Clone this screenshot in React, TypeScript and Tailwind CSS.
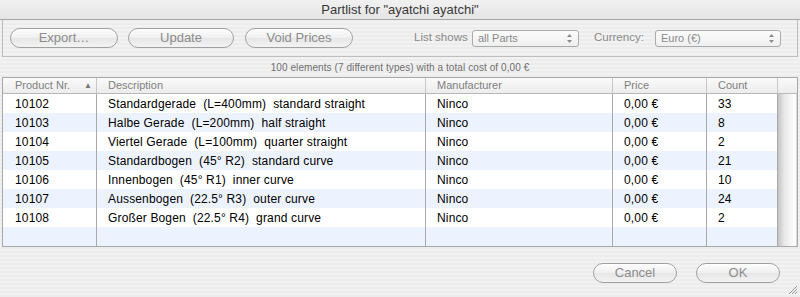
import React from "react";

const rows = [
  ["10102", "Standardgerade  (L=400mm)  standard straight", "Ninco", "0,00 €", "33"],
  ["10103", "Halbe Gerade  (L=200mm)  half straight", "Ninco", "0,00 €", "8"],
  ["10104", "Viertel Gerade  (L=100mm)  quarter straight", "Ninco", "0,00 €", "2"],
  ["10105", "Standardbogen  (45° R2)  standard curve", "Ninco", "0,00 €", "21"],
  ["10106", "Innenbogen  (45° R1)  inner curve", "Ninco", "0,00 €", "10"],
  ["10107", "Aussenbogen  (22.5° R3)  outer curve", "Ninco", "0,00 €", "24"],
  ["10108", "Großer Bogen  (22.5° R4)  grand curve", "Ninco", "0,00 €", "2"],
  ["", "", "", "", ""],
];

function PillButton({ label, w }: { label: string; w: string }) {
  return (
    <div
      className={`${w} h-[20px] rounded-full border border-[#a0a0a0] bg-[linear-gradient(to_bottom,#fdfdfd,#efefef_50%,#e6e6e6_51%,#f3f3f3)] shadow-[inset_0_1px_1px_rgba(255,255,255,0.9)] flex items-center justify-center text-[13px] text-[#8c8c8c] whitespace-nowrap`}
    >
      {label}
    </div>
  );
}

function Select({ label, w }: { label: string; w: string }) {
  return (
    <div
      className={`${w} h-[17px] shrink-0 rounded-[3px] border border-[#ababab] bg-[linear-gradient(to_bottom,#fbfbfb,#efefef)] flex items-center justify-between pl-[5px] pr-[5px] text-[11px] text-[#8a8a8a]`}
    >
      <span>{label}</span>
      <svg width="7" height="11" viewBox="0 0 7 11">
        <path d="M3.5 1 L6 4 L1 4 Z" fill="#8a8a8a" />
        <path d="M3.5 10 L6 7 L1 7 Z" fill="#8a8a8a" />
      </svg>
    </div>
  );
}

const cols = ["w-[94px]", "w-[329px]", "w-[187px]", "w-[94px]", "w-[71px]"];
const padL = ["pl-[12px]", "pl-[11px]", "pl-[11px]", "pl-[11px]", "pl-[11px]"];

export default function App() {
  return (
    <div
      className="w-[800px] h-[297px] overflow-hidden flex flex-col bg-[repeating-linear-gradient(0deg,#ececec_0px,#ececec_2px,#f2f2f2_2px,#f2f2f2_4px)] relative"
      style={{ fontFamily: '"Liberation Sans", Arial, sans-serif' }}
    >
      {/* Title bar */}
      <div className="h-[20px] shrink-0 flex items-center justify-center text-[13px] text-[#383838] bg-[linear-gradient(to_bottom,#f1f1f1,#e5e5e5)] border-b border-[#a7a7a7]">
        Partlist for "ayatchi ayatchi"
      </div>

      {/* Toolbar */}
      <div className="h-[37px] shrink-0 mx-[2px] border-l border-r border-b border-[#bdbdbd] flex items-center pl-[7px] pr-[16px]">
        <PillButton label="Export…" w="w-[108px]" />
        <div className="w-[10px]" />
        <PillButton label="Update" w="w-[106px]" />
        <div className="w-[11px]" />
        <PillButton label="Void Prices" w="w-[108px]" />
        <div className="flex-1" />
        <span className="w-[58px] shrink-0 text-[11.5px] text-[#8a8a8a]">List shows</span>
        <Select label="all Parts" w="w-[107px]" />
        <div className="w-[15px] shrink-0" />
        <span className="w-[61px] shrink-0 text-[11.5px] text-[#8a8a8a]">Currency:</span>
        <Select label="Euro (€)" w="w-[126px]" />
      </div>

      {/* Status */}
      <div className="h-[20px] shrink-0 flex items-center justify-center text-[10px] tracking-[0.08px] text-[#6f6f6f]">
        100 elements (7 different types) with a total cost of 0,00 €
      </div>

      {/* Table */}
      <div className="mx-[2px] h-[170px] shrink-0 border border-[#a8a8a8] bg-white flex flex-col">
        <div className="h-[16px] shrink-0 flex bg-[linear-gradient(to_bottom,#fafafa,#ececec)] border-b border-[#b9b9b9] text-[11px] text-[#808080]">
          {["Product Nr.", "Description", "Manufacturer", "Price", "Count"].map((h, i) => (
            <div
              key={h}
              className={`${cols[i]} ${padL[i]} shrink-0 border-r border-[#c8c8c8] flex items-center justify-between pr-[4px]`}
            >
              <span>{h}</span>
              {i === 0 && <span className="text-[8px] text-[#777]">▲</span>}
            </div>
          ))}
          <div className="flex-1" />
        </div>
        <div className="flex flex-1">
          <div className="flex flex-col">
            {rows.map((r, ri) => (
              <div
                key={ri}
                className={`h-[19px] flex text-[12px] tracking-[0.15px] text-black ${ri % 2 === 1 ? "bg-[#edf3fe]" : "bg-white"}`}
              >
                {r.map((c, ci) => (
                  <div
                    key={ci}
                    className={`${cols[ci]} ${padL[ci]} shrink-0 flex items-center border-r border-[#a9a9a9] whitespace-pre`}
                  >
                    {c}
                  </div>
                ))}
              </div>
            ))}
          </div>
          <div className="flex-1 bg-[linear-gradient(to_right,#c4c4c4,#e8e8e8_35%,#f6f6f6_70%,#ffffff)] border-r border-[#d8d8d8]" />
        </div>
      </div>

      {/* Bottom buttons */}
      <div className="flex-1 flex items-center justify-end pr-[20px] pt-[2px]">
        <PillButton label="Cancel" w="w-[84px]" />
        <div className="w-[19px]" />
        <PillButton label="OK" w="w-[84px]" />
      </div>

      {/* Resize grip */}
      <svg className="absolute right-[2px] bottom-[2px]" width="11" height="11" viewBox="0 0 11 11">
        <path d="M10 2 L2 10 M10 5 L5 10 M10 8 L8 10" stroke="#999" strokeWidth="1" />
      </svg>
    </div>
  );
}
